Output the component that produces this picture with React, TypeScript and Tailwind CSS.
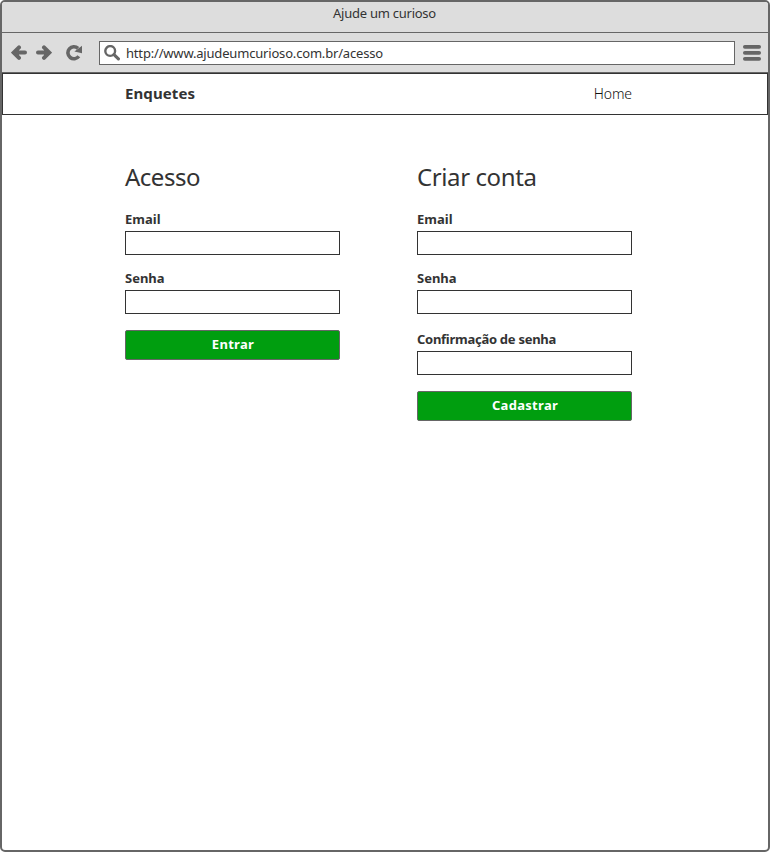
import type { ReactNode } from "react";

function BackIcon() {
  return (
    <svg width="16" height="16" viewBox="0 0 16 16" fill="none" stroke="#666" strokeWidth="4" strokeLinecap="round" strokeLinejoin="miter">
      <path d="M8 2.4 2.8 7.6 8 12.8M4 7.6H14" />
      <path d="M3 7.6 8 3.4V11.8Z" fill="#666" stroke="none" />
    </svg>
  );
}

function ForwardIcon() {
  return (
    <svg width="16" height="16" viewBox="0 0 16 16" fill="none" stroke="#666" strokeWidth="4" strokeLinecap="round" strokeLinejoin="miter">
      <path d="M8 2.4 13.2 7.6 8 12.8M12 7.6H2" />
      <path d="M13 7.6 8 3.4V11.8Z" fill="#666" stroke="none" />
    </svg>
  );
}

function ReloadIcon() {
  return (
    <svg width="17" height="16" viewBox="0 0 17 16" fill="none">
      <path d="M12 3.4A6 6 0 1 0 12.8 11.3" stroke="#666" strokeWidth="3.6" />
      <path d="M16 .8V8.2L8.4 6.6Z" fill="#666" />
    </svg>
  );
}

function SearchIcon() {
  return (
    <svg width="17" height="16" viewBox="0 0 17 16" fill="none" stroke="#666">
      <circle cx="6.2" cy="6" r="4.9" strokeWidth="2.4" />
      <path d="M10 9.7 14.4 13.8" strokeWidth="3.2" strokeLinecap="round" />
    </svg>
  );
}

function MenuIcon() {
  return (
    <svg width="18" height="16" viewBox="0 0 18 16" fill="#666">
      <rect width="18" height="3.8" rx="1.8" />
      <rect y="6" width="18" height="3.8" rx="1.8" />
      <rect y="12" width="18" height="3.8" rx="1.8" />
    </svg>
  );
}

function Field({ label, className }: { label: string; className: string }) {
  return (
    <label className={`block ${className}`}>
      <span className="block h-[21px] text-[13px] leading-[18px] font-bold">{label}</span>
      <input className="block h-6 w-full border border-[#333] bg-white px-2 text-[13px] outline-none" />
    </label>
  );
}

function SubmitButton({ children }: { children: ReactNode }) {
  return (
    <button className="mt-4 flex h-[30px] w-full items-center justify-center rounded-[2px] border border-[#666] bg-[#009e0f] pb-px pl-px text-[13px] font-bold tracking-[0.3px] text-white">
      {children}
    </button>
  );
}

export default function App() {
  return (
    <div className="flex h-[852px] w-[770px] flex-col overflow-hidden rounded-[5px] border-2 border-[#666] bg-white font-['Noto_Sans','Open_Sans',sans-serif] text-[#333]">
      <div className="h-[31px] shrink-0 border-b border-[#666] bg-[#ddd] pr-px text-center text-[13px] leading-[23px]">
        <span className="tracking-[-0.25px]">Ajude um curioso</span>
      </div>
      <div className="flex h-10 shrink-0 items-start border-b border-[#666] bg-[#ddd] pt-2 pl-[9px]">
        <div className="flex pt-1">
          <BackIcon />
          <div className="ml-[9px]"><ForwardIcon /></div>
          <div className="ml-[14px]"><ReloadIcon /></div>
        </div>
        <div className="ml-4 flex h-6 w-[636px] border border-[#666] bg-white pt-[3px] pl-1">
          <SearchIcon />
          <span className="ml-[5px] text-[13px] leading-4 tracking-[-0.18px]">http://www.ajudeumcurioso.com.br/acesso</span>
        </div>
        <div className="ml-2 pt-1"><MenuIcon /></div>
      </div>
      <nav className="flex h-[42px] w-[766px] shrink-0 items-center justify-between border border-[#333] pr-[135px] pb-px pl-[122px]">
        <span className="text-[15px] font-bold tracking-[0.1px]">Enquetes</span>
        <span className="text-[14px] font-light tracking-[-0.1px] text-[#111]">Home</span>
      </nav>
      <main className="flex gap-[77px] pt-[45px] pl-[123px]">
        <section className="w-[215px]">
          <h1 className="h-[50px] text-[24px] leading-[33px] tracking-[-0.5px]">Acesso</h1>
          <Field label="Email" className="" />
          <Field label="Senha" className="mt-[14px]" />
          <SubmitButton>Entrar</SubmitButton>
        </section>
        <section className="w-[215px]">
          <h1 className="h-[50px] text-[24px] leading-[33px] tracking-[-0.4px]">Criar conta</h1>
          <Field label="Email" className="" />
          <Field label="Senha" className="mt-[14px]" />
          <Field label="Confirmação de senha" className="mt-4 tracking-[-0.27px]" />
          <SubmitButton>Cadastrar</SubmitButton>
        </section>
      </main>
    </div>
  );
}
